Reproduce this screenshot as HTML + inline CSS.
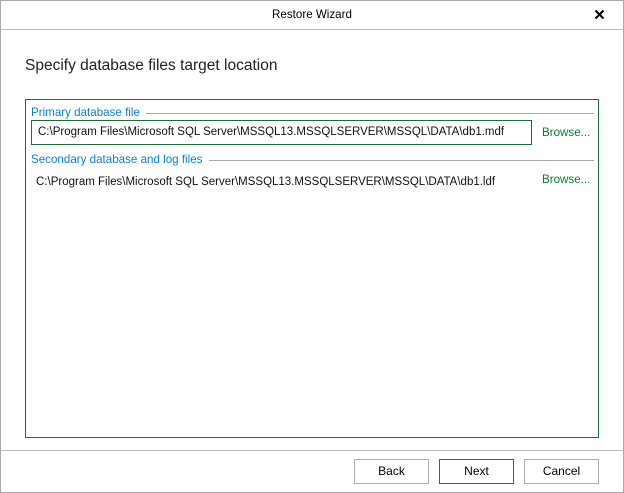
<!DOCTYPE html>
<html><head><style>
*{margin:0;padding:0;box-sizing:border-box}
body{width:624px;height:493px;background:#fff;font-family:"Liberation Sans",sans-serif;position:relative;overflow:hidden}
.a{position:absolute;white-space:nowrap}
.frame{position:absolute;left:0;top:0;width:624px;height:493px;border:1px solid #aaa}
.btn{position:absolute;top:459px;width:75px;height:25px;border:1px solid #adadad;background:#fff;font-size:12px;text-align:center;line-height:23px;color:#000}
.g{color:#0e7a35;font-size:11.6px}
.b{color:#0a7fd0;font-size:11.6px}
</style></head><body>
<div class="frame"></div>
<div class="a" style="left:1px;top:29px;width:622px;height:1px;background:#bbb"></div>
<div class="a" style="left:0;top:8px;width:624px;text-align:center;font-size:11.6px;color:#000">Restore Wizard</div>
<svg class="a" style="left:594px;top:9px" width="11" height="11"><path d="M1.5 1.5L9.5 9.5M9.5 1.5L1.5 9.5" stroke="#000" stroke-width="2"/></svg>
<div class="a" style="left:25px;top:57px;font-size:15.5px;color:#222">Specify database files target location</div>
<div class="a" style="left:25px;top:99px;width:574px;height:339px;border:1px solid #1e6b3a"></div>
<div class="a b" style="left:31px;top:106px">Primary database file</div>
<div class="a" style="left:146px;top:113px;width:448px;height:1px;background:#aaa"></div>
<div class="a" style="left:31px;top:120px;width:501px;height:25px;border:1px solid #1e6b3a"></div>
<div class="a" style="left:38px;top:126px;font-size:11.5px;color:#111">C:\Program Files\Microsoft SQL Server\MSSQL13.MSSQLSERVER\MSSQL\DATA\db1.mdf</div>
<div class="a g" style="left:542px;top:126px">Browse...</div>
<div class="a b" style="left:31px;top:153px">Secondary database and log files</div>
<div class="a" style="left:209px;top:160px;width:385px;height:1px;background:#aaa"></div>
<div class="a" style="left:36px;top:176px;font-size:11.5px;color:#111">C:\Program Files\Microsoft SQL Server\MSSQL13.MSSQLSERVER\MSSQL\DATA\db1.ldf</div>
<div class="a g" style="left:542px;top:173px">Browse...</div>
<div class="a" style="left:1px;top:450px;width:622px;height:1px;background:#bbb"></div>
<div class="btn" style="left:354px">Back</div>
<div class="btn" style="left:439px;border-color:#1e7a40">Next</div>
<div class="btn" style="left:524px">Cancel</div>
</body></html>
